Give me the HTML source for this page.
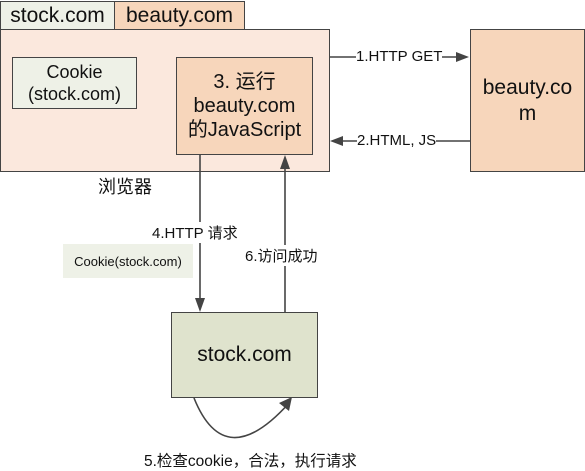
<!DOCTYPE html>
<html><head><meta charset="utf-8"><style>
body{margin:0;width:585px;height:470px;background:#fff;position:relative;overflow:hidden;font-family:"Liberation Sans","Noto Sans CJK SC",sans-serif;color:#111}
.b{position:absolute;box-sizing:border-box;border:1.5px solid #444;display:flex;align-items:center;justify-content:center;text-align:center}
.t{position:absolute;white-space:nowrap;background:#fff}
</style></head><body>
<div class="b" style="left:0;top:29px;width:330px;height:143px;background:#fbe8dd"></div>
<div class="b" style="left:0;top:1px;width:115px;height:29px;background:#eef1e7;font-size:21px">stock.com</div>
<div class="b" style="left:114px;top:1px;width:131px;height:29px;background:#f7d6bb;font-size:21px">beauty.com</div>
<div class="b" style="left:12px;top:57px;width:125px;height:52px;background:#eef1e7;font-size:18px;line-height:22px;border-width:1px">Cookie<br>(stock.com)</div>
<div class="b" style="left:176px;top:57px;width:137px;height:98px;background:#f7d6bb;font-size:20px;line-height:24px">3. 运行<br>beauty.com<br>的JavaScript</div>
<div class="t" style="left:98px;top:173px;font-size:18px">浏览器</div>
<div class="b" style="left:470px;top:29px;width:115px;height:143px;background:#f7d6bb;font-size:21px;line-height:26px">beauty.co<br>m</div>
<div class="b" style="left:171px;top:312px;width:147px;height:86px;background:#dfe3cd;font-size:21px">stock.com</div>
<div class="b" style="left:63px;top:244px;width:130px;height:34px;background:#eef1e7;border:none;font-size:13px">Cookie(stock.com)</div>
<svg style="position:absolute;left:0;top:0" width="585" height="470">
<g stroke="#444" stroke-width="1.6" fill="none">
<line x1="330" y1="57" x2="460" y2="57"/>
<line x1="470" y1="141" x2="340" y2="141"/>
<line x1="200" y1="155" x2="200" y2="302"/>
<line x1="285" y1="312" x2="285" y2="165"/>
<path d="M194 398 Q225 475 290 402"/>
</g>
<g fill="#444">
<polygon points="469,57 456,52 456,62"/>
<polygon points="330,141 343,136 343,146"/>
<polygon points="200,312 195,298 205,298"/>
<polygon points="285,155 280,169 290,169"/>
<polygon points="292,397 279,403 289,411"/>
</g>
</svg>
<div class="t" style="left:356px;top:48px;font-size:15px">1.HTTP GET</div>
<div class="t" style="left:357px;top:132px;font-size:15px">2.HTML, JS</div>
<div class="t" style="left:152px;top:222px;font-size:15px">4.HTTP 请求</div>
<div class="t" style="left:245px;top:245px;font-size:15px">6.访问成功</div>
<div class="t" style="left:144px;top:449px;font-size:15.5px">5.检查cookie，合法，执行请求</div>
</body></html>
